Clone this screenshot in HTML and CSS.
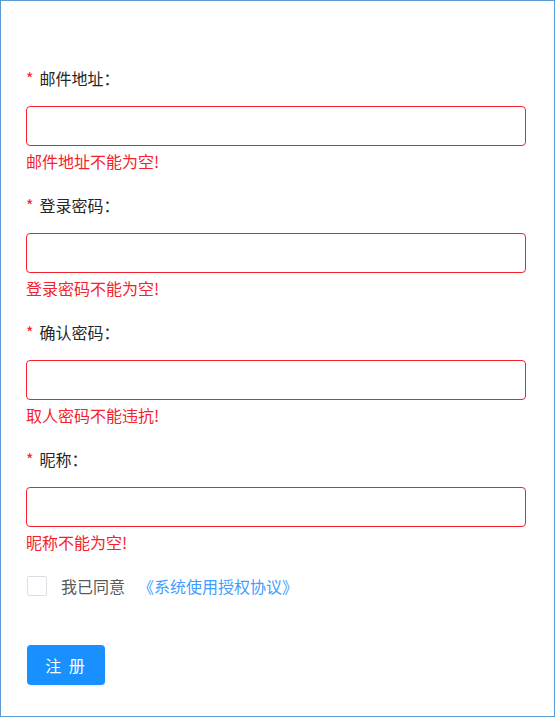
FILE: index.html
```html
<!DOCTYPE html>
<html lang="zh-CN">
<head>
<meta charset="utf-8">
<link rel="stylesheet" href="styles.css">
</head>
<body>
<div class="page">
  <form class="form">
    <div class="item">
      <label class="label"><span class="req">*</span>邮件地址：</label>
      <div class="input"></div>
      <div class="error">邮件地址不能为空!</div>
    </div>
    <div class="item">
      <label class="label"><span class="req">*</span>登录密码：</label>
      <div class="input"></div>
      <div class="error">登录密码不能为空!</div>
    </div>
    <div class="item">
      <label class="label"><span class="req">*</span>确认密码：</label>
      <div class="input"></div>
      <div class="error">取人密码不能违抗!</div>
    </div>
    <div class="item">
      <label class="label"><span class="req">*</span>昵称：</label>
      <div class="input"></div>
      <div class="error">昵称不能为空!</div>
    </div>
    <div class="agree">
      <span class="checkbox"></span>
      <span class="agree-text">我已同意</span>
      <a class="link">《系统使用授权协议》</a>
    </div>
    <button type="button" class="btn">注 册</button>
  </form>
</div>
</body>
</html>
```
FILE: styles.css
```css
html, body {
  margin: 0;
  padding: 0;
  background: #fff;
}
.page {
  box-sizing: border-box;
  width: 555px;
  height: 717px;
  border: 1px solid #5b9bd5;
  padding: 65px 28px 0 25px;
  font-family: "Noto Sans CJK SC", "Noto Sans", sans-serif;
  font-size: 16px;
}
.form {
  display: flex;
  flex-direction: column;
}
.item {
  display: flex;
  flex-direction: column;
  margin-bottom: 21px;
}
.label {
  line-height: 24px;
  color: #262626;
  margin-bottom: 16px;
}
.req {
  color: #f5222d;
  margin-right: 6px;
}
.input {
  box-sizing: border-box;
  height: 40px;
  border: 1px solid #f5222d;
  border-radius: 4px;
  background: #fff;
}
.error {
  margin-top: 4px;
  line-height: 22px;
  color: #f5222d;
}
.agree {
  display: flex;
  align-items: center;
  height: 24px;
  color: #595959;
}
.checkbox {
  box-sizing: border-box;
  width: 20px;
  height: 20px;
  border: 1px solid #dcdfe6;
  border-radius: 2px;
  margin-left: 1px;
  margin-right: 14px;
}
.agree-text {
  margin-right: 13px;
}
.link {
  color: #409eff;
}
.btn {
  margin-top: 47px;
  align-self: flex-start;
  margin-left: 1px;
  width: 78px;
  height: 40px;
  border: none;
  border-radius: 4px;
  background: #1890ff;
  color: #fff;
  font-family: inherit;
  font-size: 16px;
  letter-spacing: 2px;
  padding: 0;
  box-shadow: 0 2px 0 rgba(0, 0, 0, 0.04);
}
```
